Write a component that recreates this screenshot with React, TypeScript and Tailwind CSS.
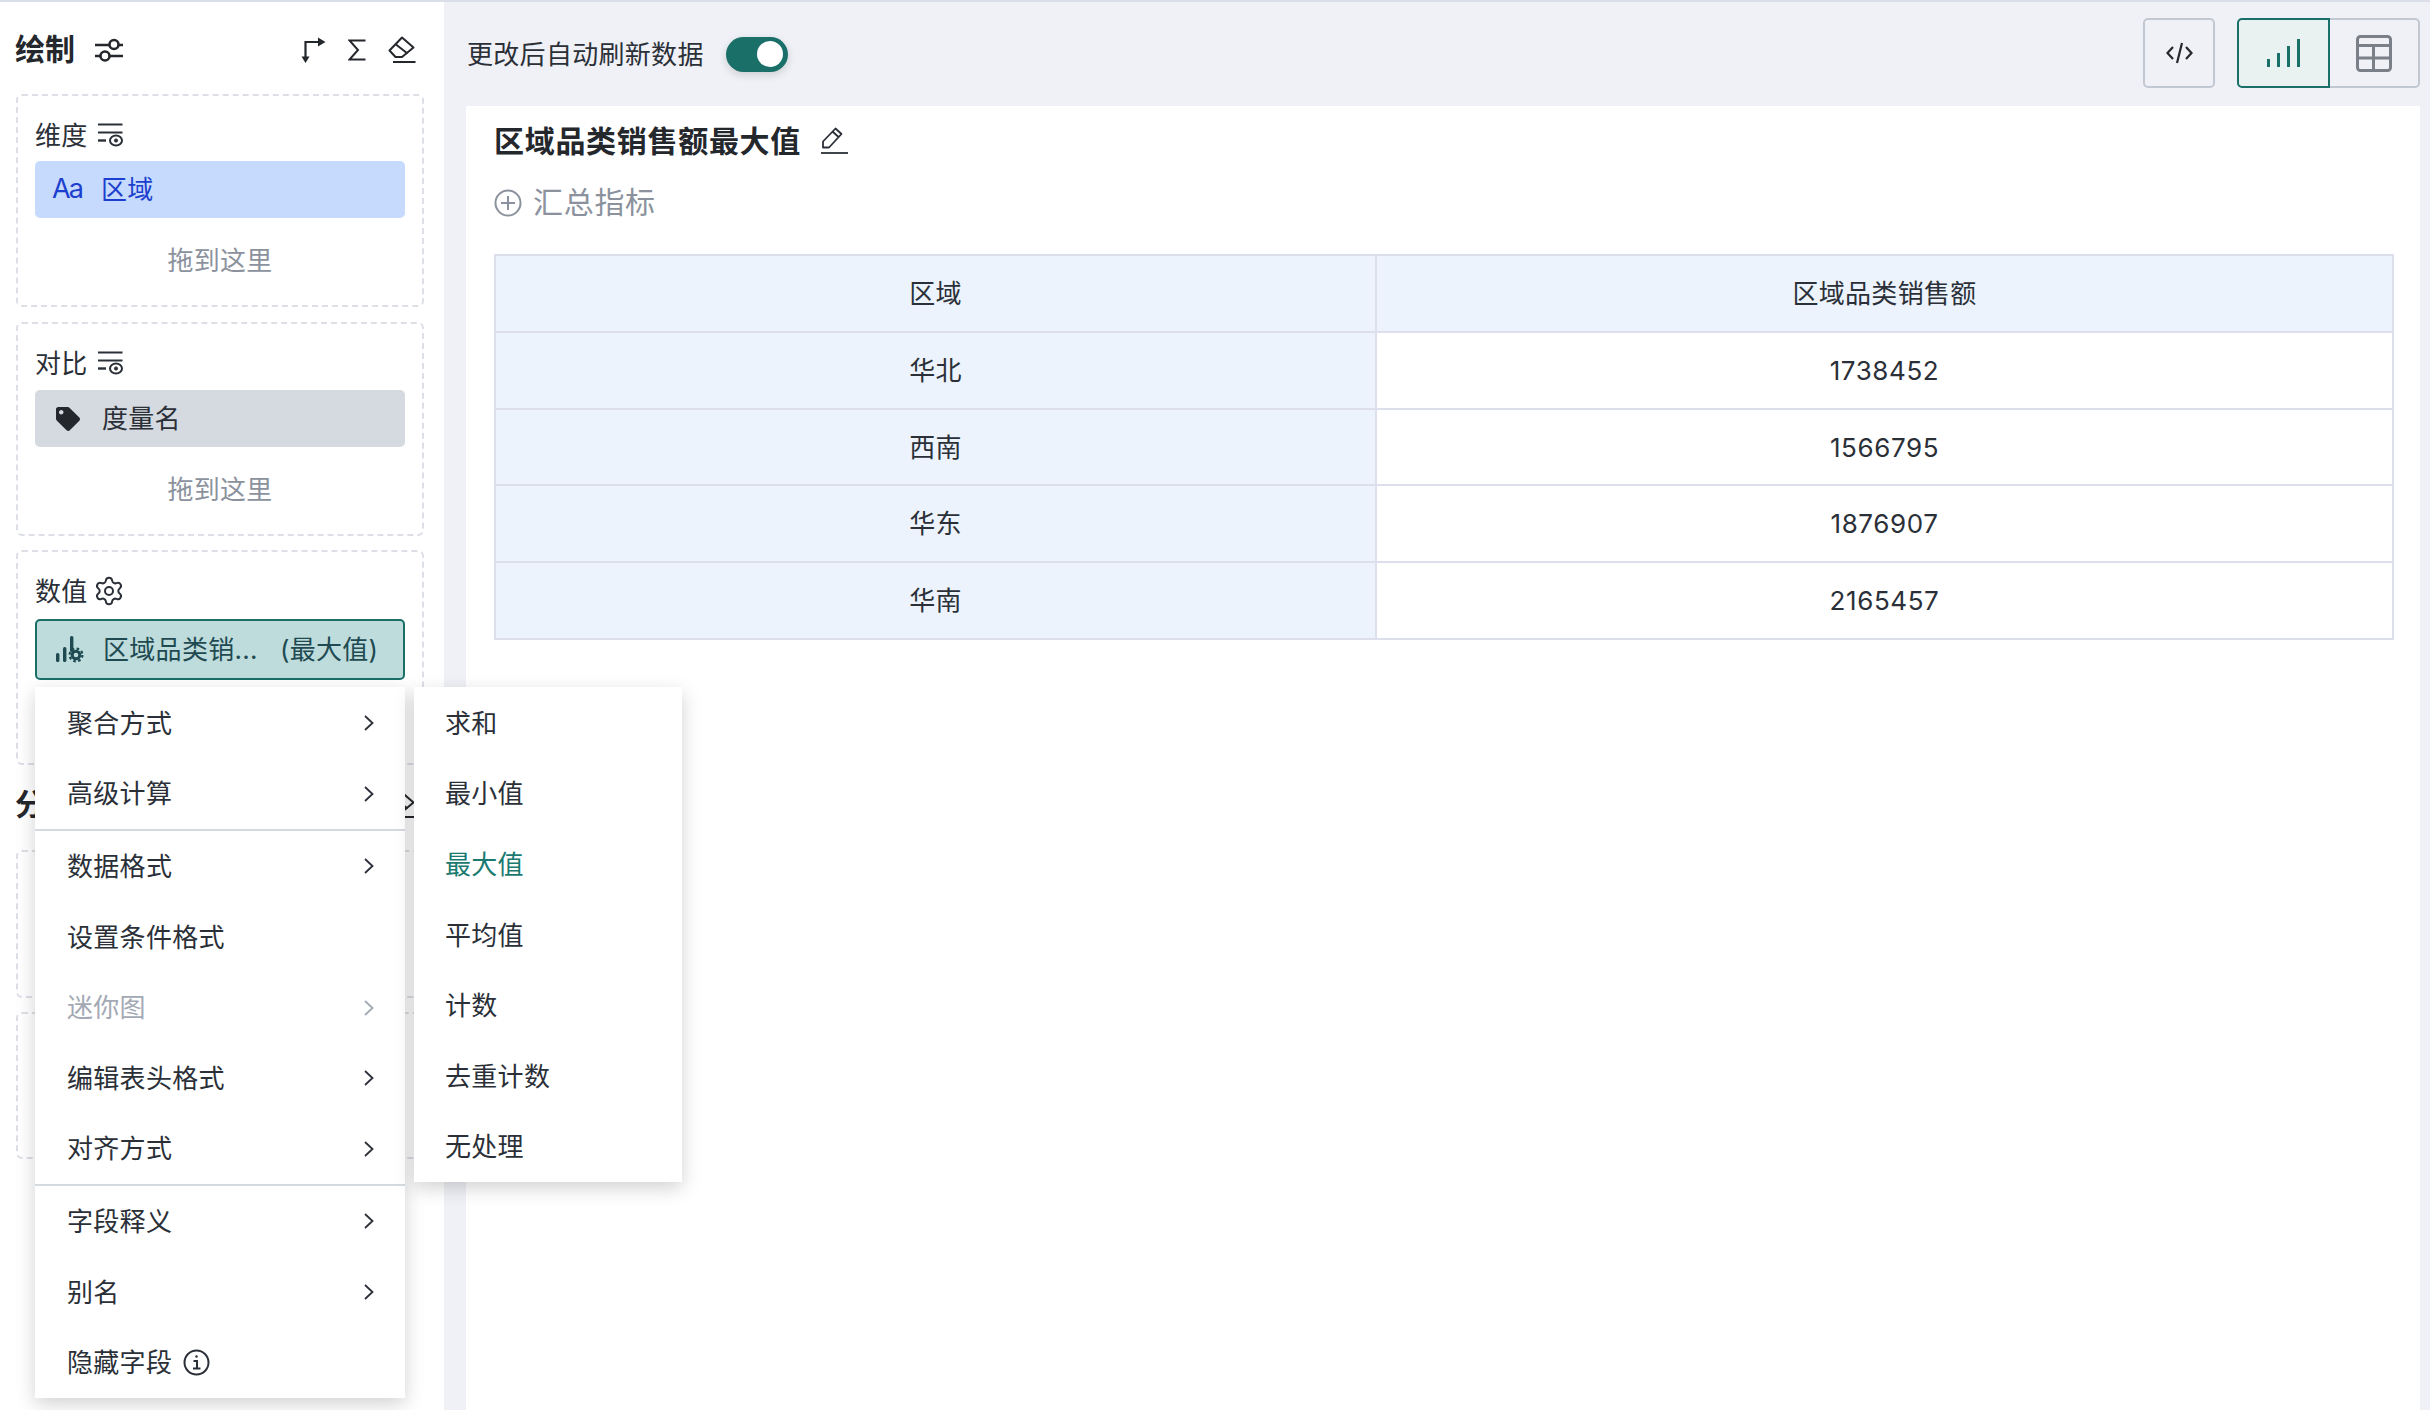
import { Settings } from 'lucide-react';
import { FaTag } from 'react-icons/fa';

const font = { fontFamily: 'Inter, "Noto Sans CJK SC", sans-serif' };

function Chevron({ className = 'text-[#2b3038]' }: { className?: string }) {
  return (
    <svg width="10" height="16" viewBox="0 0 10 16" fill="none" stroke="currentColor" strokeWidth="1.8" className={className}>
      <path d="M1 1l7.5 7L1 15" />
    </svg>
  );
}

function SlidersIcon() {
  return (
    <svg width="28" height="24" viewBox="0 0 28 24" fill="none" stroke="#24272c" strokeWidth="2.6">
      <path d="M0 7h14M24 7h4M0 18h5M15 18h13" />
      <circle cx="19" cy="6.5" r="4.5" />
      <circle cx="10" cy="18" r="4.5" />
    </svg>
  );
}

function RouteIcon() {
  return (
    <svg width="25" height="26" viewBox="0 0 25 26" fill="none">
      <path d="M4.5 21V5h14" stroke="#24272c" strokeWidth="2.2" />
      <path d="M17 0.5l7.5 4.5-7.5 4.5zM0.5 19.5h8L4.5 26z" fill="#24272c" />
    </svg>
  );
}

function SigmaIcon() {
  return (
    <svg width="18" height="22" viewBox="0 0 18 22" fill="none" stroke="#24272c" strokeWidth="2">
      <path d="M17.5 1.5H1.5L10 11l-8.5 9.5h16" />
    </svg>
  );
}

function EraserIcon() {
  return (
    <svg width="28" height="27" viewBox="0 0 28 27" fill="none" stroke="#24272c" strokeWidth="2">
      <path d="M1.5 14.5L14 1.5l11.5 10L14 21H7.5z" strokeLinejoin="round" />
      <path d="M8 8.5l11.5 9" />
      <path d="M5 26h22.5" />
    </svg>
  );
}

function FilterEyeIcon() {
  return (
    <svg width="25" height="24" viewBox="0 0 25 24" fill="none" stroke="#2b3038">
      <path d="M0 1.5h24.5M0 9.5h24.5" strokeWidth="2" />
      <path d="M0 17.5h8" strokeWidth="2.4" />
      <ellipse cx="18" cy="17.5" rx="6" ry="5" strokeWidth="2" />
      <circle cx="18" cy="17.5" r="1.6" fill="#2b3038" />
    </svg>
  );
}

function MeasureIcon() {
  return (
    <svg width="28" height="27" viewBox="0 0 28 27" fill="none">
      <rect x="0" y="17" width="3.4" height="9" rx="1.5" fill="#1f4a52" />
      <rect x="7" y="11" width="3.4" height="15" rx="1.5" fill="#1f4a52" />
      <rect x="14" y="0" width="3.4" height="16" rx="1.5" fill="#1f4a52" />
      <circle cx="20" cy="19" r="3.8" stroke="#1f4a52" strokeWidth="3" />
      <circle cx="20" cy="19" r="6.4" stroke="#1f4a52" strokeWidth="2.2" strokeDasharray="2.6 2.4" />
    </svg>
  );
}

function DropZone({ heightClass, label, icon, children }: { heightClass: string; label?: string; icon?: React.ReactNode; children?: React.ReactNode }) {
  return (
    <div className={`${heightClass} border-2 border-dashed border-[#dcdfe6] rounded-[6px] px-[17px] pt-[22px]`}>
      {label && (
        <div className="h-[34px] flex items-center gap-[10px] text-[26px] text-[#2b3038]">
          {label}
          {icon}
        </div>
      )}
      {children}
    </div>
  );
}

function DropHint() {
  return <div className="h-[84px] flex items-center justify-center text-[26px] text-[#8b929d]">拖到这里</div>;
}

function Pill({ className, children }: { className: string; children: React.ReactNode }) {
  return <div className={`flex items-center rounded-[5px] text-[26px] ${className}`}>{children}</div>;
}

function HeaderIcons() {
  return (
    <div className="flex items-center gap-[22px] mr-[8px]">
      <RouteIcon />
      <SigmaIcon />
      <EraserIcon />
    </div>
  );
}

function MenuRow({ label, arrow = true, disabled = false, extra }: { label: string; arrow?: boolean; disabled?: boolean; extra?: React.ReactNode }) {
  return (
    <div className={`h-[70.6px] flex items-center justify-between pl-[32px] pr-[31px] text-[26px] ${disabled ? 'text-[#a3a9b4]' : 'text-[#2b3038]'}`}>
      <span className="flex items-center gap-[11px]">
        {label}
        {extra}
      </span>
      {arrow && <Chevron className={disabled ? 'text-[#a3a9b4]' : 'text-[#2b3038]'} />}
    </div>
  );
}

const subItems = ['求和', '最小值', '最大值', '平均值', '计数', '去重计数', '无处理'];

const rows = [
  { region: '华北', value: '1738452' },
  { region: '西南', value: '1566795' },
  { region: '华东', value: '1876907' },
  { region: '华南', value: '2165457' },
];

export default function App() {
  return (
    <div className="h-screen overflow-hidden flex border-t-2 border-[#d9dee8] bg-[#f0f1f6] tracking-[0.3px]" style={font}>
      {/* left panel */}
      <aside className="relative w-[444px] shrink-0 bg-white pl-4 pr-5">
        <div className="h-[92px] flex items-center justify-between pt-[3px]">
          <div className="flex items-center gap-[20px]">
            <span className="text-[30px] font-bold text-[#24272c] -ml-[1px] tracking-normal">绘制</span>
            <SlidersIcon />
          </div>
          <HeaderIcons />
        </div>

        <DropZone heightClass="h-[213px]" label="维度" icon={<FilterEyeIcon />}>
          <div className="h-[9px]" />
          <Pill className="h-[57px] bg-[#c5dafc] text-[#1d3fcf]">
            <span className="w-[66px] pl-[17px] text-[27px] tracking-[-2px]">Aa</span>
            区域
          </Pill>
          <DropHint />
        </DropZone>

        <div className="mt-[15px]">
          <DropZone heightClass="h-[214px]" label="对比" icon={<FilterEyeIcon />}>
            <div className="h-[10px]" />
            <Pill className="h-[57px] bg-[#d5d9e0] text-[#2b3038]">
              <span className="w-[67px] pl-[21px]"><FaTag size={24} color="#24272c" /></span>
              度量名
            </Pill>
            <DropHint />
          </DropZone>
        </div>

        <div className="mt-[14px]">
          <DropZone heightClass="h-[215px]" label="数值" icon={<Settings size={32} strokeWidth={1.5} color="#2b3038" className="-ml-[5px]" />}>
            <div className="h-[11px]" />
            <Pill className="h-[61px] bg-[#bddcdb] border-2 border-[#1a6f69] text-[#1f4a52]">
              <span className="w-[66px] pl-[19px]"><MeasureIcon /></span>
              区域品类销...
              <span className="ml-[22px]">(最大值)</span>
            </Pill>
          </DropZone>
        </div>

        <div className="h-[85px] flex items-center justify-between pb-[6px]">
          <span className="text-[30px] font-bold text-[#24272c] -ml-[1px] tracking-normal">分析</span>
          <HeaderIcons />
        </div>

        <DropZone heightClass="h-[148px]" />
        <div className="mt-[14px]">
          <DropZone heightClass="h-[147px]" />
        </div>

        {/* field context menu */}
        <div className="absolute left-[35px] top-[685px] w-[370px] pt-[1px] bg-white shadow-[0_6px_18px_rgba(0,0,0,0.18)]">
          <MenuRow label="聚合方式" />
          <MenuRow label="高级计算" />
          <div className="h-[2px] bg-[#d5d9e0]" />
          <MenuRow label="数据格式" />
          <MenuRow label="设置条件格式" arrow={false} />
          <MenuRow label="迷你图" disabled />
          <MenuRow label="编辑表头格式" />
          <MenuRow label="对齐方式" />
          <div className="h-[2px] bg-[#d5d9e0]" />
          <MenuRow label="字段释义" />
          <MenuRow label="别名" />
          <MenuRow
            label="隐藏字段"
            arrow={false}
            extra={
              <svg width="27" height="27" viewBox="0 0 27 27" fill="none" stroke="#2b3038" strokeWidth="2">
                <circle cx="13.5" cy="13.5" r="12" />
                <path d="M10.5 12h3.5v7M10 19.5h7.5" />
                <circle cx="13.5" cy="7.5" r="1.2" fill="#2b3038" stroke="none" />
              </svg>
            }
          />
        </div>

        {/* aggregation submenu */}
        <div className="absolute left-[414px] top-[685px] w-[268px] pt-[1px] z-10 bg-white shadow-[0_6px_18px_rgba(0,0,0,0.18)]">
          {subItems.map((item) => (
            <div key={item} className={`h-[70.6px] flex items-center pl-[31px] text-[26px] ${item === '最大值' ? 'text-[#1a7a70]' : 'text-[#2b3038]'}`}>
              {item}
            </div>
          ))}
        </div>
      </aside>

      {/* main */}
      <main className="flex-1 flex flex-col min-w-0">
        <div className="h-[104px] shrink-0 flex items-center justify-between pl-[23px] pr-[10px]">
          <div className="flex items-center gap-[22px]">
            <span className="text-[26px] text-[#2b3038]">更改后自动刷新数据</span>
            <div className="w-[62px] h-[35px] rounded-full bg-[#1a6f69] flex items-center justify-end pr-[5px] shadow-[0_3px_8px_rgba(0,0,0,0.15)]">
              <div className="w-[26px] h-[26px] rounded-full bg-white" />
            </div>
          </div>
          <div className="flex items-center gap-[22px] -mt-[2px]">
            <div className="w-[72px] h-[70px] border-2 border-[#c2c8d1] rounded-[5px] flex items-center justify-center">
              <svg width="27" height="22" viewBox="0 0 27 22" fill="none" stroke="#24272c" strokeWidth="2.2">
                <path d="M7 5L1.5 11 7 17M20 5l5.5 6L20 17M16 1l-5 20" />
              </svg>
            </div>
            <div className="flex">
              <div className="w-[93px] h-[70px] border-2 border-[#1a6f69] bg-[#e9f1f1] rounded-l-[5px] flex items-center justify-center">
                <svg width="33" height="28" viewBox="0 0 33 28" fill="#1a6f69">
                  <rect x="0" y="20" width="3" height="8" />
                  <rect x="10" y="14" width="3" height="14" />
                  <rect x="20" y="7" width="3" height="21" />
                  <rect x="30" y="0" width="3" height="28" />
                </svg>
              </div>
              <div className="w-[90px] h-[70px] border-2 border-l-0 border-[#c2c8d1] rounded-r-[5px] flex items-center justify-center">
                <svg width="36" height="37" viewBox="0 0 36 37" fill="none" stroke="#7a7f88" strokeWidth="3">
                  <rect x="1.5" y="1.5" width="33" height="34" rx="3" />
                  <path d="M1.5 10.5h33M1.5 23h33M17.5 10.5v25" />
                </svg>
              </div>
            </div>
          </div>
        </div>

        <div className="flex-1 ml-[22px] mr-[10px] bg-white pl-[28px] pr-[26px]">
          <div className="h-[71px] flex items-center gap-[19px]">
            <h1 className="text-[30px] font-bold text-[#24272c] tracking-[0.7px]">区域品类销售额最大值</h1>
            <svg width="28" height="27" viewBox="0 0 28 27" fill="none" stroke="#2b3038" strokeWidth="1.8" className="-mt-[2px]">
              <path d="M3 20.5v-6L15.5 1.5l6 5.5L9 20.5zM12.5 4.5l6 5.5" strokeLinejoin="round" />
              <path d="M1 26h27" />
            </svg>
          </div>
          <div className="h-[51px] flex items-center gap-[11px] text-[30px] tracking-[0.7px] text-[#8b929d]">
            <svg width="28" height="28" viewBox="0 0 28 28" fill="none" stroke="#8b929d" strokeWidth="2">
              <circle cx="14" cy="14" r="12.5" />
              <path d="M7 14h14M14 7v14" />
            </svg>
            汇总指标
          </div>

          <div className="mt-[26px] grid grid-cols-[881px_1fr] border-2 border-[#dde0ec] text-[26px] text-[#2b3038]">
            <div className="h-[75px] flex items-center justify-center bg-[#ecf3fc] border-r-2 border-[#dde0ec]">区域</div>
            <div className="h-[75px] flex items-center justify-center bg-[#ecf3fc]">区域品类销售额</div>
            {rows.map((row) => (
              <div key={row.region} className="contents">
                <div className="h-[76.7px] flex items-center justify-center bg-[#ecf3fc] border-r-2 border-t-2 border-[#dde0ec]">{row.region}</div>
                <div className="h-[76.7px] flex items-center justify-center border-t-2 border-[#dde0ec] tracking-[0.6px]">{row.value}</div>
              </div>
            ))}
          </div>
        </div>
      </main>
    </div>
  );
}
